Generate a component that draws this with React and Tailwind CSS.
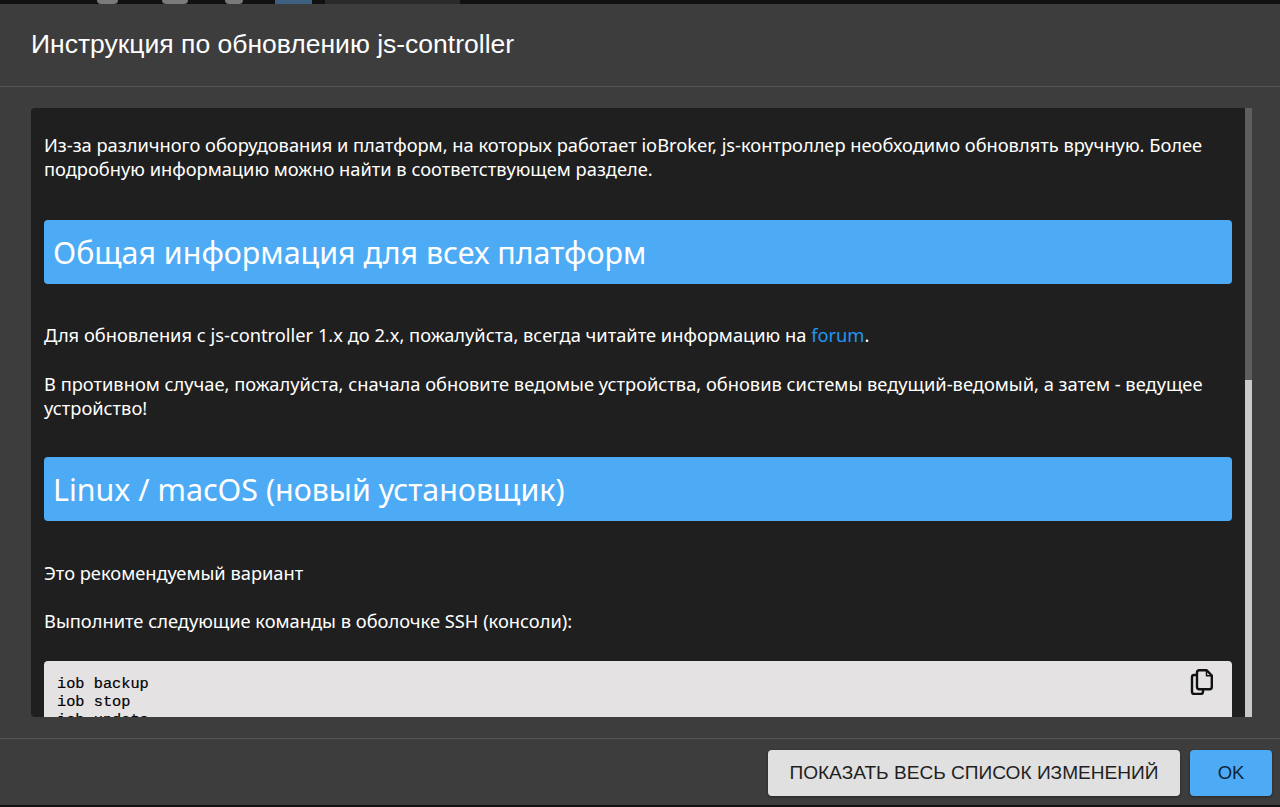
import React from 'react'

const Heading = ({ className, children }) => (
  <h2 className={`h-[64px] rounded-[4px] bg-[#4dabf5] pl-[9px] text-[30.4px] leading-[65px] text-white ${className}`}>
    {children}
  </h2>
)

const CopyIcon = () => (
  <svg width="24" height="26" viewBox="0 0 24 26" fill="none" stroke="#111" strokeWidth="2.4" strokeLinejoin="round">
    <path d="M8 3.500c0-1.400.800-2.300 2.200-2.300h7.300l5.300 5.300v11.500c0 1.400-.800 2.200-2.200 2.200H10.200C8.800 20.200 8 19.400 8 18z" />
    <path d="M17.500 1.500V6.800h5" strokeWidth="1.500" />
    <path d="M8 6H5.200C3.800 6 3 6.800 3 8.200v14.600c0 1.400.800 2.200 2.200 2.200h6.600c1.400 0 2.200-.800 2.200-2.200V20.200" />
  </svg>
)

export default function App() {
  return (
    <div className="flex h-[807px] flex-col overflow-hidden bg-[#111] pb-[2px] font-['Noto_Sans',sans-serif]">
      {/* What shows of the page behind the dialog */}
      <div className="flex h-[4px] shrink-0 overflow-hidden">
        <div className="ml-[97px] w-[21px] rounded-b-[6px] bg-[#7a7a7a]" />
        <div className="ml-[44px] w-[26px] rounded-b-[6px] bg-[#7a7a7a]" />
        <div className="ml-[37px] w-[18px] rounded-b-[4px] bg-[#7a7a7a]" />
        <div className="ml-[32px] w-[37px] bg-[#3d5f80]" />
        <div className="ml-[13px] w-[135px] bg-[#2a2a2a]" />
      </div>

      <div className="flex min-h-0 flex-1 flex-col bg-[#3d3d3d]">
        {/* Title */}
        <div className="flex h-[83px] shrink-0 items-center border-b border-[#555] pb-[1px] pl-[31px]">
          <h1 className="font-['Liberation_Sans',sans-serif] text-[26.5px] text-white">
            Инструкция по обновлению js-controller
          </h1>
        </div>

        {/* Content */}
        <div className="flex min-h-0 flex-1 pt-[21px] pr-[28px] pb-[21px] pl-[31px]">
          <div className="flex min-w-0 flex-1 rounded-[4px] bg-[#1f1f1f]">
            <div className="min-w-0 flex-1 overflow-hidden pt-[25px] pr-[13px] pl-[13px] text-[18.3px] leading-[24px] text-white">
              <p>
                Из-за различного оборудования и платформ, на которых работает ioBroker, js-контроллер необходимо обновлять вручную. Более подробную информацию можно найти в соответствующем разделе.
              </p>
              <Heading className="mt-[39px]">Общая информация для всех платформ</Heading>
              <p className="mt-[39px]">
                Для обновления с js-controller 1.x до 2.x, пожалуйста, всегда читайте информацию на{' '}
                <a className="text-[#2196f3]">forum</a>.
              </p>
              <p className="mt-[25px]">
                В противном случае, пожалуйста, сначала обновите ведомые устройства, обновив системы ведущий-ведомый, а затем - ведущее устройство!
              </p>
              <Heading className="mt-[37px]">Linux / macOS (новый установщик)</Heading>
              <p className="mt-[40px]">Это рекомендуемый вариант</p>
              <p className="mt-[24px]">Выполните следующие команды в оболочке SSH (консоли):</p>
              <div className="relative mt-[28px] rounded-[4px] bg-[#e4e2e3] px-[13px] pt-[14px] pb-[13px] font-['Liberation_Mono',monospace] text-[15.3px] leading-[18px] text-black [-webkit-text-stroke:0.2px_black]">
                <div>iob backup</div>
                <div>iob stop</div>
                <div>iob update</div>
                <div>iob upgrade self</div>
                <div className="absolute top-[8px] right-[19px]">
                  <CopyIcon />
                </div>
              </div>
            </div>
            {/* Scrollbar */}
            <div className="flex w-[7px] shrink-0 flex-col bg-[#c9c9c9]">
              <div className="h-[272px] bg-[#5e5e5e]" />
            </div>
          </div>
        </div>

        {/* Actions */}
        <div className="flex h-[67px] shrink-0 justify-end gap-[10px] border-t border-[#555] pt-[11px] pr-[8px] font-['Liberation_Sans',sans-serif]">
          <button className="h-[46px] w-[412px] rounded-[4px] bg-[#e0e0e0] text-[19.100px] text-[#1f1f1f] shadow-[0_1px_3px_rgba(0,0,0,0.4)]">
            ПОКАЗАТЬ ВЕСЬ СПИСОК ИЗМЕНЕНИЙ
          </button>
          <button className="h-[46px] w-[82px] rounded-[4px] bg-[#4dabf5] text-[18.500px] text-[#10253a] shadow-[0_1px_3px_rgba(0,0,0,0.4)]">
            OK
          </button>
        </div>
      </div>
    </div>
  )
}
